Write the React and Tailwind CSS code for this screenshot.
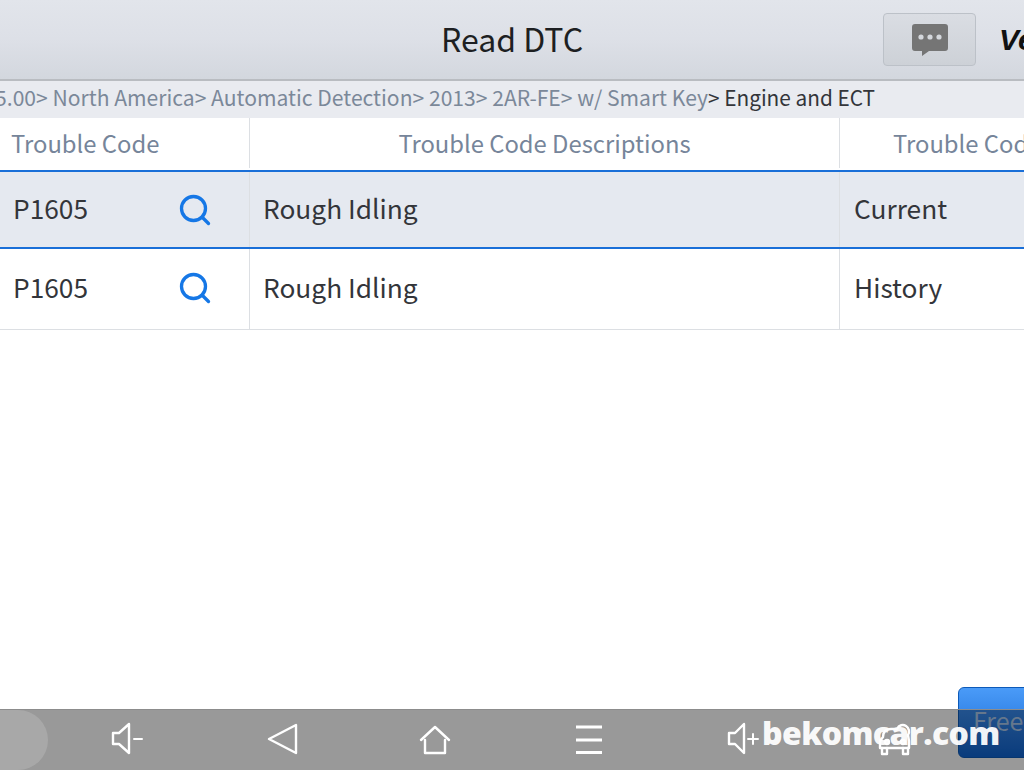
import React from 'react';
import { Search } from 'lucide-react';

const font = 'font-["Noto_Sans_CJK_SC","Noto_Sans",sans-serif]';

const Row = ({ code, desc, status, selected }) => (
    <div className={`grid grid-cols-[250px_590px_184px] ${selected ? 'h-[79px] bg-[#e5e9f0] border-y-2 border-[#1a6fd8]' : 'h-[81px] border-b border-[#dcdfe3]'}`}>
        <div className="flex items-center justify-between pb-1 pl-[13px] pr-[36px] border-r border-[#dcdfe3]">
            <span className="text-[26.3px] text-[#33353a]">{code}</span>
            <Search size={36} strokeWidth={2.2} className={`text-[#1577e6] ${selected ? 'mt-1' : 'mt-[2px]'}`} />
        </div>
        <div className="flex items-center pb-1 pl-[13px] border-r border-[#dcdfe3] text-[26.3px] text-[#33353a]">{desc}</div>
        <div className="flex items-center pb-1 pl-[14px] text-[26.3px] text-[#33353a]">{status}</div>
    </div>
);

const NavIcon = ({ children, className }) => (
    <svg viewBox="0 0 40 40" fill="none" stroke="#fff" strokeWidth="2.4" strokeLinejoin="round" strokeLinecap="round" className={`w-10 h-10 ${className}`}>
        {children}
    </svg>
);

export default function App() {
    return (
        <div className={`relative w-[1024px] h-[770px] overflow-hidden bg-white flex flex-col ${font}`}>
            <header className="h-[81px] shrink-0 flex items-center overflow-hidden bg-gradient-to-b from-[#e2e5eb] via-[#dde0e7] to-[#d3d7de] border-b-2 border-[#b9bcc1]">
                <div className="w-[883px] shrink-0 pl-[441px] pb-1">
                    <span className="block text-[32px] text-[#1d1f22] whitespace-nowrap">Read DTC</span>
                </div>
                <button className="w-[93px] h-[53px] shrink-0 flex items-center justify-center rounded border border-[#bcc1c8] bg-gradient-to-b from-[#dadde3] to-[#cdd1d7]">
                    <svg viewBox="0 0 36 32" className="w-9 h-8" fill="#757575">
                        <path d="M3 0h30a3 3 0 0 1 3 3v21a3 3 0 0 1-3 3H17l-7 5v-5H3a3 3 0 0 1-3-3V3a3 3 0 0 1 3-3z" />
                        <circle cx="9" cy="13" r="2.6" fill="#d4d7dc" />
                        <circle cx="18" cy="13" r="2.6" fill="#d4d7dc" />
                        <circle cx="27" cy="13" r="2.6" fill="#d4d7dc" />
                    </svg>
                </button>
                <span className="ml-[23px] shrink-0 text-[30px] font-black italic text-[#111] font-['Liberation_Sans',sans-serif]">Ve</span>
            </header>

            <div className="h-[37px] shrink-0 flex items-center justify-end pb-1 pr-[149px] bg-[#e9ebf0] whitespace-nowrap overflow-hidden">
                <span className="text-[21.1px] text-[#7b8899]">5.00&gt; North America&gt; Automatic Detection&gt; 2013&gt; 2AR-FE&gt; w/ Smart Key</span>
                <span className="text-[20.8px] text-[#33353a]">&gt; Engine and ECT</span>
            </div>

            <div className="h-[52px] shrink-0 grid grid-cols-[250px_590px_184px] pb-[2px] text-[23.8px] text-[#76859a] whitespace-nowrap">
                <div className="flex items-center pl-[11px] border-r border-[#dcdfe3]">Trouble Code</div>
                <div className="flex items-center justify-center border-r border-[#dcdfe3]">Trouble Code Descriptions</div>
                <div className="flex items-center pl-[53px] overflow-hidden">Trouble Code Type</div>
            </div>

            <Row code="P1605" desc="Rough Idling" status="Current" selected />
            <Row code="P1605" desc="Rough Idling" status="History" />

            {/* button sits under the translucent nav bar */}
            <div className="absolute left-[958px] top-[687px] w-[80px] h-[71px] rounded-md bg-gradient-to-b from-[#4a9bf8] to-[#0f64cf] pt-[14px] pl-[14px] text-[25px] text-[#a9c6ea] border border-[#0d5ab8]">
                Free
            </div>

            <nav className="absolute left-0 bottom-0 w-full h-[61px] bg-black/40 border-t border-[#8c8c8c]">
                <div className="absolute left-0 top-0 w-[48px] h-[60px] rounded-r-[30px] bg-white/15" />
                <NavIcon className="absolute left-[108px] top-[9px]">
                    <path d="M5 14v11h6l10 9V5l-10 9z" />
                    <path d="M26 20h8" strokeWidth="2" />
                </NavIcon>
                <NavIcon className="absolute left-[263px] top-[9px]">
                    <path d="M6 20 33 6v28z" />
                </NavIcon>
                <NavIcon className="absolute left-[415px] top-[10px]">
                    <path d="M6 20 20 7l14 13" />
                    <path d="M10 20v13h20V20" />
                </NavIcon>
                <NavIcon className="absolute left-[569px] top-[10px]">
                    <path d="M7 7h26M7 20h26M7 32.500h26" strokeWidth="3" strokeLinecap="butt" />
                </NavIcon>
                <NavIcon className="absolute left-[724px] top-[9px]">
                    <path d="M5 14v11h6l9 9V5l-9 9z" />
                    <path d="M24 20h10M29 15v10" strokeWidth="2" />
                </NavIcon>
                <NavIcon className="absolute left-[875px] top-[9px]">
                    <path d="M8 18c0-5 3-8 8-8h6c2-4 6-5 9-3 3 2 4 6 2 9l1 6v7H5v-7z" />
                    <path d="M7 29v6h5v-6M28 29v6h5v-6" />
                    <circle cx="12" cy="23" r="2" />
                    <circle cx="28" cy="23" r="2" />
                </NavIcon>
            </nav>

            <span className="absolute left-[762px] top-[709px] text-[32px] font-extrabold text-white/95 font-['Open_Sans',sans-serif] tracking-[-0.6px]">bekomcar.com</span>
        </div>
    );
}
